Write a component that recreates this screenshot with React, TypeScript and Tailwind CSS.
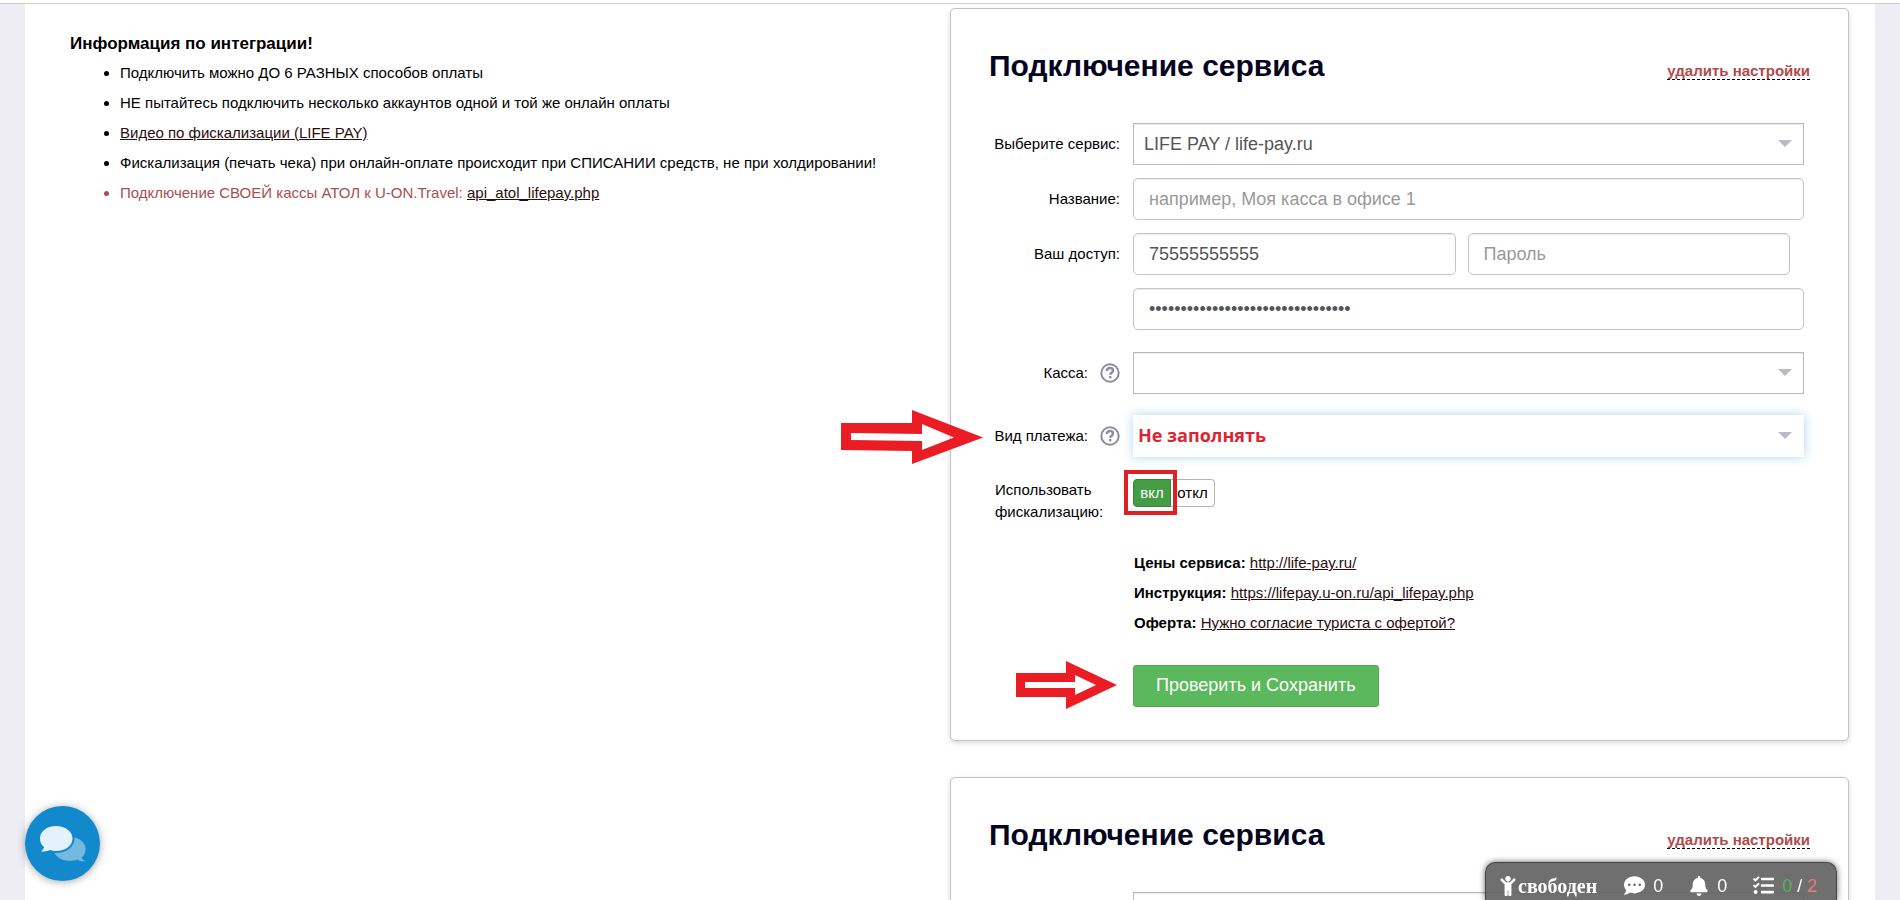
import type { ReactNode } from "react";
import { FaBell, FaChild, FaCommentDots, FaTasks } from "react-icons/fa";

const inputStyle =
  "h-[42px] w-full rounded-[5px] border border-[#c4c4c8] bg-white px-[15px] text-[18px] text-[#555] shadow-[inset_0_1px_1px_rgba(0,0,0,0.08)] outline-none placeholder:text-[#999]";
const linkStyle = "text-[#2b0d0d] underline";

const HelpIcon = () => (
  <svg className="ml-3 size-5 shrink-0" viewBox="0 0 20 20" fill="none" stroke="#8d8ba0">
    <circle cx="10" cy="10" r="8.7" strokeWidth="2" />
    <path d="M6.800 8c.2-2 1.500-3 3.200-3 1.800 0 3 1 3 2.500 0 2.200-2.800 2.200-2.800 4.300" strokeWidth="2.400" />
    <path d="M9 14.200h2.400" strokeWidth="2.300" />
  </svg>
);

const BigArrow = () => (
  <svg
    className="absolute top-[-5px] right-full mr-1.5 h-[54px] w-[142px]"
    viewBox="0 0 142 54"
    fill="#ec1c24"
    fillRule="evenodd"
  >
    <path d="M0 13H71V0L142 27.500 71 54V41L0 40ZM10 23V30L81 31V40L113 27.500 81 14V24Z" />
  </svg>
);

const SmallArrow = () => (
  <svg
    className="absolute top-[-4px] left-[27px] h-[48px] w-[101px]"
    viewBox="0 0 101 48"
    fill="#ec1c24"
    fillRule="evenodd"
  >
    <path d="M0 12H50V0L101 24 50 48V36H0ZM9 21V27H59V34L80 24 59 14V21Z" />
  </svg>
);

const Row = ({
  id,
  label,
  help,
  className = "",
  children,
}: {
  id: string;
  label?: string;
  help?: boolean;
  className?: string;
  children: ReactNode;
}) => (
  <div className={`relative grid grid-cols-[144px_1fr] items-center ${className}`}>
    <div className="flex items-center justify-end pr-[13px]">
      {label && <label htmlFor={id}>{label}</label>}
      {help && <HelpIcon />}
    </div>
    {children}
  </div>
);

const Select = ({ id, value, title, className }: { id: string; value: string; title?: string; className: string }) => (
  <div className="relative">
    <select
      id={id}
      aria-label={title}
      className={`h-[42px] w-full appearance-none bg-white text-[18px] outline-none ${className}`}
    >
      <option>{value}</option>
    </select>
    <svg
      className="pointer-events-none absolute top-[17px] right-3 h-[7px] w-[14px]"
      viewBox="0 0 14 7"
      fill="#bdbac8"
    >
      <path d="M0 0h14L7 7z" />
    </svg>
  </div>
);

const plainSelect =
  "border border-[#b9b9bd] px-2.5 text-[#555] shadow-[inset_0_1px_1px_rgba(0,0,0,0.08)]";

const Card = ({ children }: { children: ReactNode }) => (
  <section className="rounded-[5px] border border-[#c3c3c7] bg-white px-[38px] pt-[37px] pb-[33px] shadow-[0_2px_5px_rgba(0,0,0,0.15)]">
    <header className="mb-[37px] flex items-baseline justify-between">
      <h2 className="text-[30px] leading-10 font-bold text-[#05051f]">Подключение сервиса</h2>
      <a href="#delete" className="border-b border-dashed border-black leading-4 font-bold text-[#b04a4a]">
        удалить настройки
      </a>
    </header>
    <form className="pr-1.5">{children}</form>
  </section>
);

const ChatButton = () => (
  <button
    type="button"
    aria-label="Чат"
    className="fixed bottom-[19px] left-[25px] size-[75px] rounded-full bg-[#1289cd] shadow-[0_1px_8px_rgba(0,0,0,0.35)]"
  >
    <svg viewBox="0 0 75 75">
      <path
        d="M45 31c9 0 15.500 5 15.500 12 0 4-1.500 6.500-4 8.500.5 1.500 1.500 2.500 3.500 3.500-3 .6-5.500 0-7.500-1.600C45 56.500 33 55 29 46z"
        fill="#73b9e1"
      />
      <path
        d="M31 20c9.400 0 16.500 5.500 16.500 12.500S40.400 45 31 45c-2.200 0-4.200-.3-6-.9-2.400 1.300-5.400 1.600-9 1.200 1.800-1.100 2.800-2.600 3-4.300-2.800-2.200-4-5-4-8.500C15 25.500 21.600 20 31 20z"
        fill="#e4f2fb"
        stroke="#1289cd"
        strokeWidth="4"
        paintOrder="stroke"
      />
    </svg>
  </button>
);

const StatusBar = () => (
  <footer className="fixed right-[63px] bottom-0 flex h-[38px] w-[352px] items-center rounded-t-[10px] border border-b-0 border-[#444] bg-[#636363]/92 px-3 pt-2 text-[18px] text-white shadow-[0_0_6px_rgba(0,0,0,0.6)]">
    <FaChild className="size-5" />
    <span className="font-['Liberation_Serif',serif] text-[20px] font-bold">свободен</span>
    <span className="ml-[27px] flex items-center gap-2">
      <FaCommentDots className="size-[21px]" />0
    </span>
    <span className="ml-[26px] flex items-center gap-2">
      <FaBell className="size-5" />0
    </span>
    <span className="ml-[26px] flex items-center gap-2">
      <FaTasks className="size-[21px]" />
      <span>
        <span className="text-[#4cb85c]">0</span> / <span className="text-[#f07878]">2</span>
      </span>
    </span>
  </footer>
);

export const App = () => {
  return (
    <div className="h-screen overflow-hidden bg-[#eeedf3] font-['Liberation_Sans',Arial,sans-serif] text-[15px] leading-[22px] text-black">
      <div className="h-1 border-b border-[#ccc] bg-white" />
      <main className="mx-[25px] grid min-h-full grid-cols-2 bg-white">
        <article className="pt-[26px] pl-[45px]">
          <h1 className="text-[17px] leading-7 font-bold">Информация по интеграции!</h1>
          <ul className="list-disc pl-[50px] leading-[30px]">
            <li>Подключить можно ДО 6 РАЗНЫХ способов оплаты</li>
            <li>НЕ пытайтесь подключить несколько аккаунтов одной и той же онлайн оплаты</li>
            <li>
              <a href="#video" className={linkStyle}>
                Видео по фискализации (LIFE PAY)
              </a>
            </li>
            <li>Фискализация (печать чека) при онлайн-оплате происходит при СПИСАНИИ средств, не при холдировании!</li>
            <li className="text-[#a94f4f]">
              Подключение СВОЕЙ кассы АТОЛ к U-ON.Travel:{" "}
              <a href="#atol" className={linkStyle}>
                api_atol_lifepay.php
              </a>
            </li>
          </ul>
        </article>

        <div className="flex flex-col gap-9 pt-1 pr-[26px]">
          <Card>
            <Row id="service" label="Выберите сервис:" className="mb-[13px]">
              <Select id="service" value="LIFE PAY / life-pay.ru" className={plainSelect} />
            </Row>
            <Row id="name" label="Название:" className="mb-[13px]">
              <input id="name" placeholder="например, Моя касса в офисе 1" className={inputStyle} />
            </Row>
            <Row id="login" label="Ваш доступ:" className="mb-[13px]">
              <div className="grid grid-cols-2 gap-3 pr-3.5">
                <input id="login" defaultValue="75555555555" className={inputStyle} />
                <input type="password" aria-label="Пароль" placeholder="Пароль" className={inputStyle} />
              </div>
            </Row>
            <Row id="key" className="mb-[22px]">
              <input
                id="key"
                type="password"
                aria-label="Ключ"
                defaultValue="00000000000000000000000000000000"
                className={inputStyle}
              />
            </Row>
            <Row id="cashbox" label="Касса:" help className="mb-[21px]">
              <Select id="cashbox" value="" className={plainSelect} />
            </Row>
            <Row id="payment" label="Вид платежа:" help className="mb-[22px]">
              <Select
                id="payment"
                value="Не заполнять"
                className="px-[5px] pb-0.5 font-['Open_Sans',sans-serif] font-bold text-[#dc2430] shadow-[0_0_10px_rgba(102,175,233,0.5)]"
              />
              <BigArrow />
            </Row>

            <div className="grid grid-cols-[144px_1fr]">
              <span id="fiscal" className="pl-1.5">
                Использовать фискализацию:
              </span>
              <div role="group" aria-labelledby="fiscal" className="relative flex items-start">
                <button
                  type="button"
                  className="h-7 w-[38px] rounded-l-[4px] border border-[#398439] bg-[#449d44] text-[15px] text-white"
                >
                  вкл
                </button>
                <button type="button" className="h-7 w-11 rounded-r-[4px] border border-l-0 border-[#b5b5b5] text-[15px]">
                  откл
                </button>
                <span className="absolute -top-[9px] -left-[9px] h-[45px] w-[53px] border-4 border-[#dd1f26]" />
              </div>
            </div>

            <div className="mt-[25px] mb-[27px] pl-[145px] leading-[30px]">
              <p>
                <b>Цены сервиса:</b>{" "}
                <a href="#price" className={linkStyle}>
                  http://life-pay.ru/
                </a>
              </p>
              <p>
                <b>Инструкция:</b>{" "}
                <a href="#manual" className={linkStyle}>
                  https://lifepay.u-on.ru/api_lifepay.php
                </a>
              </p>
              <p>
                <b>Оферта:</b>{" "}
                <a href="#offer" className={linkStyle}>
                  Нужно согласие туриста с офертой?
                </a>
              </p>
            </div>

            <div className="relative pl-36">
              <SmallArrow />
              <button
                type="submit"
                className="block h-[42px] rounded-[3px] border border-[#52a852] bg-[#5cb85c] px-[22px] pb-0.5 text-[18px] text-white"
              >
                Проверить и Сохранить
              </button>
            </div>
          </Card>

          <Card>
            <Row id="service-2">
              <Select id="service-2" value="" title="Выберите сервис" className={plainSelect} />
            </Row>
          </Card>
        </div>
      </main>
      <ChatButton />
      <StatusBar />
    </div>
  );
};

export default App;
